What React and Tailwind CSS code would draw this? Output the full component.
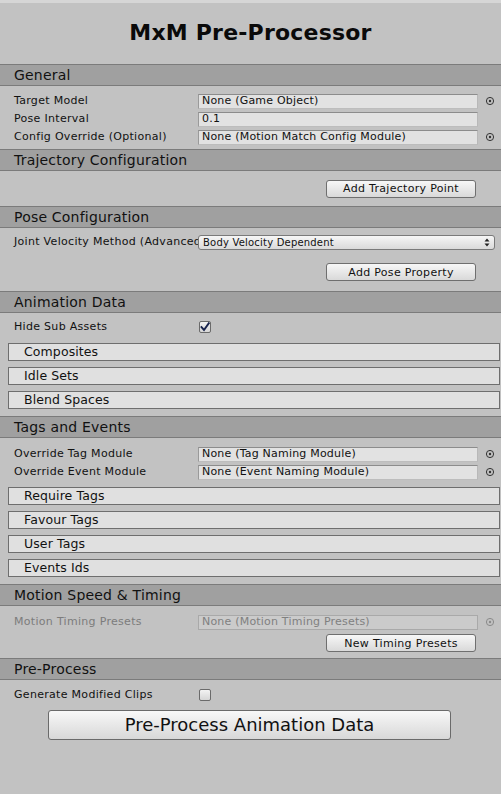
import React from 'react';

const Header = ({ children }) => (
  <div className="h-[22px] bg-[#a0a0a0] border-y border-[#7b7b7b] flex items-center pl-[14px] text-[14px] tracking-[0.2px] text-[#111] leading-none">
    {children}
  </div>
);

const Picker = ({ disabled }) => (
  <svg className="w-[10px] h-[10px]" viewBox="0 0 10 10">
    <circle cx="5" cy="5" r="3.6" fill="none" stroke={disabled ? '#8a8a8a' : '#333'} strokeWidth="1" />
    <circle cx="5" cy="5" r="1.2" fill={disabled ? '#8a8a8a' : '#333'} />
  </svg>
);

const Label = ({ children, disabled }) => (
  <div className={`w-[198px] shrink-0 pl-[14px] whitespace-nowrap overflow-hidden text-[11px] tracking-[0.3px] ${disabled ? 'text-[#7c7c7c]' : 'text-[#111]'}`}>
    {children}
  </div>
);

const ObjectRow = ({ label, value, disabled, picker = true }) => (
  <div className="h-[18px] flex items-center">
    <Label disabled={disabled}>{label}</Label>
    <div
      className={`w-[280px] h-[15px] flex items-center px-[3px] text-[11px] tracking-[0.2px] border whitespace-nowrap overflow-hidden ${
        disabled
          ? 'bg-[#cbcbcb] border-[#a9a9a9] text-[#808080]'
          : 'bg-[#e2e2e2] border-t-[#8c8c8c] border-l-[#9a9a9a] border-r-[#b8b8b8] border-b-[#bdbdbd] text-[#111]'
      }`}
    >
      {value}
    </div>
    {picker && (
      <div className="ml-[7px] flex items-center">
        <Picker disabled={disabled} />
      </div>
    )}
  </div>
);

const Button = ({ children, className = '' }) => (
  <button
    className={`h-[18px] border border-[#6f6f6f] rounded-[3px] bg-gradient-to-b from-[#f7f7f7] to-[#d9d9d9] text-[11px] tracking-[0.3px] text-[#111] leading-none ${className}`}
  >
    {children}
  </button>
);

const Foldout = ({ children }) => (
  <div className="ml-[8px] mr-[1px] h-[18px] bg-[#e0e0e0] border border-[#6e6e6e] flex items-center pl-[15px] text-[12.5px] tracking-[0.1px] text-[#111] leading-none">
    {children}
  </div>
);

const Checkbox = ({ checked }) => (
  <div className="ml-[1px] w-[12px] h-[12px] border border-[#6a6a6a] rounded-[2px] bg-gradient-to-b from-[#f3f3f3] to-[#d6d6d6] flex items-center justify-center">
    {checked && (
      <svg className="w-[10px] h-[10px]" viewBox="0 0 10 10">
        <path d="M1.5 5.2 L4 8 L8.8 1.2" fill="none" stroke="#17234d" strokeWidth="1.9" strokeLinecap="square" />
      </svg>
    )}
  </div>
);

export default function App() {
  return (
    <div className="w-[501px] h-[794px] bg-[#c2c2c2] overflow-hidden font-['DejaVu_Sans',sans-serif] border-t-[3px] border-[#d6d6d6]">
      <div className="h-[61px] flex items-center justify-center pb-[2px]">
        <h1 className="text-[22px] font-bold tracking-[0.2px] text-[#0a0a0a] leading-none">MxM Pre-Processor</h1>
      </div>

      <Header>General</Header>
      <div className="pt-[6px] pb-[3px]">
        <ObjectRow label="Target Model" value="None (Game Object)" />
        <ObjectRow label="Pose Interval" value="0.1" picker={false} />
        <ObjectRow label="Config Override (Optional)" value="None (Motion Match Config Module)" />
      </div>

      <Header>Trajectory Configuration</Header>
      <div className="h-[35px] flex items-center justify-end pr-[25px]">
        <Button className="w-[150px]">Add Trajectory Point</Button>
      </div>

      <Header>Pose Configuration</Header>
      <div className="pt-[5px] pb-[10px]">
        <div className="h-[18px] flex items-center">
          <Label>Joint Velocity Method (Advanced)</Label>
          <div className="w-[297px] h-[15px] border border-[#7a7a7a] rounded-[3px] bg-gradient-to-b from-[#f6f6f6] to-[#dadada] flex items-center justify-between px-[4px] text-[10px] tracking-[0.2px] text-[#111]">
            <span>Body Velocity Dependent</span>
            <svg className="w-[6px] h-[9px]" viewBox="0 0 6 9">
              <path d="M3 0.5 L5.5 3.5 L0.5 3.5 Z M3 8.5 L5.5 5.5 L0.5 5.5 Z" fill="#222" />
            </svg>
          </div>
        </div>
        <div className="mt-[12px] flex justify-end pr-[25px]">
          <Button className="w-[150px]">Add Pose Property</Button>
        </div>
      </div>

      <Header>Animation Data</Header>
      <div className="pt-[5px] pb-[7px]">
        <div className="h-[18px] flex items-center">
          <Label>Hide Sub Assets</Label>
          <Checkbox checked />
        </div>
        <div className="mt-[7px] flex flex-col gap-[6px]">
          <Foldout>Composites</Foldout>
          <Foldout>Idle Sets</Foldout>
          <Foldout>Blend Spaces</Foldout>
        </div>
      </div>

      <Header>Tags and Events</Header>
      <div className="pt-[7px] pb-[7px]">
        <ObjectRow label="Override Tag Module" value="None (Tag Naming Module)" />
        <ObjectRow label="Override Event Module" value="None (Event Naming Module)" />
        <div className="mt-[6px] flex flex-col gap-[6px]">
          <Foldout>Require Tags</Foldout>
          <Foldout>Favour Tags</Foldout>
          <Foldout>User Tags</Foldout>
          <Foldout>Events Ids</Foldout>
        </div>
      </div>

      <Header>Motion Speed &amp; Timing</Header>
      <div className="pt-[7px] pb-[6px]">
        <ObjectRow label="Motion Timing Presets" value="None (Motion Timing Presets)" disabled />
        <div className="mt-[3px] flex justify-end pr-[25px]">
          <Button className="w-[150px]">New Timing Presets</Button>
        </div>
      </div>

      <Header>Pre-Process</Header>
      <div className="pt-[6px]">
        <div className="h-[18px] flex items-center">
          <Label>Generate Modified Clips</Label>
          <Checkbox />
        </div>
        <div className="mt-[6px] pl-[48px]">
          <button className="w-[403px] h-[30px] border border-[#6a6a6a] rounded-[3px] bg-gradient-to-b from-[#f8f8f8] to-[#d8d8d8] text-[18px] text-[#111] leading-none">
            Pre-Process Animation Data
          </button>
        </div>
      </div>
    </div>
  );
}
